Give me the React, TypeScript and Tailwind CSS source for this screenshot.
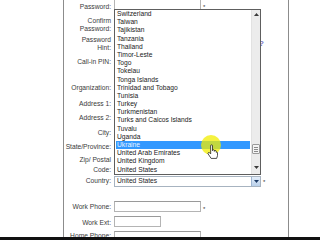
const countries = [
  "Switzerland",
  "Taiwan",
  "Tajikistan",
  "Tanzania",
  "Thailand",
  "Timor-Leste",
  "Togo",
  "Tokelau",
  "Tonga Islands",
  "Trinidad and Tobago",
  "Tunisia",
  "Turkey",
  "Turkmenistan",
  "Turks and Caicos Islands",
  "Tuvalu",
  "Uganda",
  "Ukraine",
  "United Arab Emirates",
  "United Kingdom",
  "United States",
];

function Label({ lines, pt, leading = "leading-[8px]" }: { lines: string[]; pt: string; leading?: string }) {
  return (
    <div className={`w-[47px] shrink-0 text-right text-[#3a3a3a] ${pt} ${leading}`}>
      {lines.map((l) => (
        <div key={l}>{l}</div>
      ))}
    </div>
  );
}

function Field({ w = "w-[87px]", mt = "mt-0" }: { w?: string; mt?: string }) {
  return <div className={`ml-[3px] h-[11px] ${w} ${mt} border border-[#b4b4b4] border-t-[#9a9a9a] bg-white`} />;
}

function Star({ mt }: { mt: string }) {
  return <span className={`ml-[2px] text-[6px] leading-[6px] text-[#333] ${mt}`}>*</span>;
}

export default function App() {
  return (
    <div className="relative w-[320px] h-[240px] overflow-hidden bg-white text-[6.7px] font-['Liberation_Sans',Arial,sans-serif]">
      {/* form column */}
      <div className="ml-[63px] w-[226px] h-[237px] overflow-hidden border-l border-r border-[#8c8c8c]">
        <div className="-mt-[1px] flex flex-col">
          <div className="flex h-[14.5px] items-start">
            <Label lines={["Password:"]} pt="pt-[4px]" />
            <Field />
            <Star mt="mt-[5px]" />
          </div>
          <div className="flex h-[19.5px] items-start">
            <Label lines={["Confirm", "Password:"]} pt="pt-[3px]" leading="leading-[8.3px]" />
            <Field mt="mt-[3px]" />
          </div>
          <div className="flex h-[22px] items-start">
            <Label lines={["Password", "Hint:"]} pt="pt-[3px]" />
            <Field w="w-[143px]" mt="mt-[3px]" />
            <span className="ml-[2px] mt-[7px] text-[8px] leading-[8px] font-bold text-[#7474c4]">?</span>
          </div>
          <div className="flex h-[26px] items-start">
            <Label lines={["Call-in PIN:"]} pt="pt-[3px]" />
            <Field mt="mt-[1px]" />
          </div>
          <div className="flex h-[16px] items-start">
            <Label lines={["Organization:"]} pt="pt-[3px]" />
            <Field mt="mt-[1px]" />
          </div>
          <div className="flex h-[14px] items-start">
            <Label lines={["Address 1:"]} pt="pt-[3px]" />
            <Field mt="mt-[1px]" />
          </div>
          <div className="flex h-[14.5px] items-start">
            <Label lines={["Address 2:"]} pt="pt-[3px]" />
            <Field mt="mt-[1px]" />
          </div>
          <div className="flex h-[14px] items-start">
            <Label lines={["City:"]} pt="pt-[3px]" />
            <Field mt="mt-[1px]" />
          </div>
          <div className="flex h-[12px] items-start">
            <Label lines={["State/Province:"]} pt="pt-[3px]" />
          </div>
          <div className="flex h-[24.5px] items-start">
            <Label lines={["Zip/ Postal", "Code:"]} pt="pt-[3px]" leading="leading-[10px]" />
            <Field w="w-[60px]" mt="mt-[5px]" />
          </div>
          <div className="flex h-[24px] items-start">
            <Label lines={["Country:"]} pt="pt-[1px]" />
            <div className="ml-[3px] flex h-[10.5px] w-[147px] items-center border border-[#a7b3c0] bg-white">
              <span className="flex-1 pl-[2px] leading-[8px] text-[#1e1e1e]">United States</span>
              <div className="flex h-full w-[9px] items-center justify-center border-l border-[#9fb6d2] bg-gradient-to-b from-[#e4eefa] to-[#b9d0ea]">
                <svg width="5" height="3" viewBox="0 0 5 3">
                  <path d="M0 0h5L2.5 3z" fill="#1d3b66" />
                </svg>
              </div>
            </div>
            <Star mt="mt-[3px]" />
          </div>
          <div className="flex h-[16px] items-start">
            <Label lines={["Work Phone:"]} pt="pt-[3px]" />
            <Field mt="mt-[1px]" />
            <Star mt="mt-[6px]" />
          </div>
          <div className="flex h-[15px] items-start">
            <Label lines={["Work Ext:"]} pt="pt-[3px]" />
            <Field w="w-[47px]" />
          </div>
          <div className="flex h-[6px] items-start">
            <Label lines={["Home Phone:"]} pt="pt-[1px]" />
            <Field />
          </div>
        </div>
      </div>
      <div className="h-[3px] bg-[#111]" />

      {/* open country list */}
      <div className="absolute left-[114px] top-[9px] flex h-[166px] w-[147px] border border-[#5e5e5e] bg-white">
        <div className="flex-1 px-[1px] text-[#1a1a1a]">
          {countries.map((c) => (
            <div
              key={c}
              className={`h-[8.2px] pl-[1px] leading-[8.2px] whitespace-nowrap ${c === "Ukraine" ? "bg-[#3399ff] text-[#eaf3ff]" : ""}`}
            >
              {c}
            </div>
          ))}
        </div>
        <div className="flex w-[9px] flex-col items-center bg-[#ececec] border-l border-[#e2e2e2]">
          <svg className="mt-[3px]" width="5" height="3" viewBox="0 0 5 3">
            <path d="M0 3h5L2.5 0z" fill="#3a3a3a" />
          </svg>
          <div className="mt-[128px] flex h-[10px] w-[8px] flex-col items-center justify-center gap-[1px] rounded-[1px] border border-[#9a9a9a] bg-[#f4f4f4]">
            <div className="h-px w-[4px] bg-[#8a8a8a]" />
            <div className="h-px w-[4px] bg-[#8a8a8a]" />
            <div className="h-px w-[4px] bg-[#8a8a8a]" />
          </div>
          <svg className="mt-[12px]" width="5" height="3" viewBox="0 0 5 3">
            <path d="M0 0h5L2.5 3z" fill="#3a3a3a" />
          </svg>
        </div>
      </div>

      {/* cursor highlight */}
      <div className="absolute left-[201px] top-[135px] h-[20px] w-[20px] rounded-full bg-[#f2ee00]/75" />
      <svg className="absolute left-[207px] top-[144px]" width="11" height="16" viewBox="0 0 12 16">
        <path
          d="M4 1.2a1 1 0 0 1 2 0V6.5a1 1 0 0 1 2 0V7.3a1 1 0 0 1 2 0V8.3a1 1 0 0 1 1.5.5V12l-1 3H4.5L1.3 10.2a1 1 0 0 1 1.6-1.3L4 10Z"
          fill="#fff"
          stroke="#111"
          strokeWidth="0.8"
          strokeLinejoin="round"
        />
      </svg>
    </div>
  );
}
